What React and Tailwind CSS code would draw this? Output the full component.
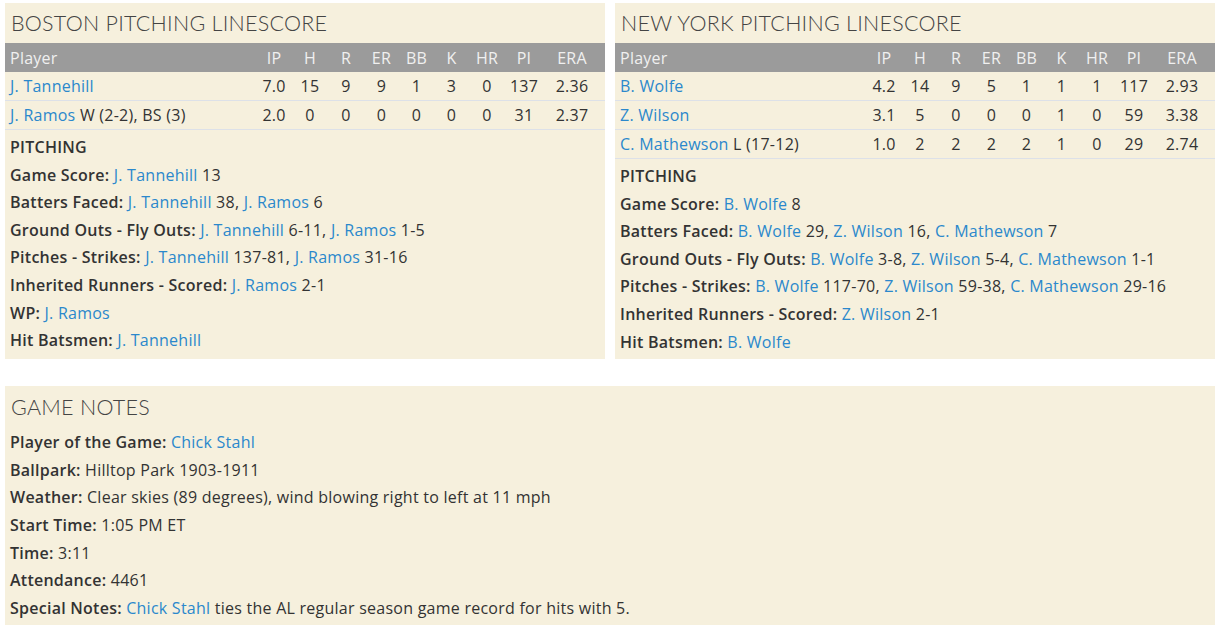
import React from "react";

const FONT = { fontFamily: "'Open Sans', Lato, sans-serif" };
const TITLE_FONT = { fontFamily: "Lato, 'Open Sans', sans-serif" };

const cols = "grid grid-cols-[1fr_36px_36px_36px_35px_35px_35px_36px_38px_62px]";
const heads = ["IP", "H", "R", "ER", "BB", "K", "HR", "PI", "ERA"];

const boston = {
  title: "BOSTON PITCHING LINESCORE",
  rows: [
    { name: "J. Tannehill", note: "", stats: ["7.0", "15", "9", "9", "1", "3", "0", "137", "2.36"] },
    { name: "J. Ramos", note: "W (2-2), BS (3)", stats: ["2.0", "0", "0", "0", "0", "0", "0", "31", "2.37"] },
  ],
  lines: [
    ["Game Score:", [["J. Tannehill", " 13"]]],
    ["Batters Faced:", [["J. Tannehill", " 38, "], ["J. Ramos", " 6"]]],
    ["Ground Outs - Fly Outs:", [["J. Tannehill", " 6-11, "], ["J. Ramos", " 1-5"]]],
    ["Pitches - Strikes:", [["J. Tannehill", " 137-81, "], ["J. Ramos", " 31-16"]]],
    ["Inherited Runners - Scored:", [["J. Ramos", " 2-1"]]],
    ["WP:", [["J. Ramos", ""]]],
    ["Hit Batsmen:", [["J. Tannehill", ""]]],
  ],
};

const newYork = {
  title: "NEW YORK PITCHING LINESCORE",
  rows: [
    { name: "B. Wolfe", note: "", stats: ["4.2", "14", "9", "5", "1", "1", "1", "117", "2.93"] },
    { name: "Z. Wilson", note: "", stats: ["3.1", "5", "0", "0", "0", "1", "0", "59", "3.38"] },
    { name: "C. Mathewson", note: "L (17-12)", stats: ["1.0", "2", "2", "2", "2", "1", "0", "29", "2.74"] },
  ],
  lines: [
    ["Game Score:", [["B. Wolfe", " 8"]]],
    ["Batters Faced:", [["B. Wolfe", " 29, "], ["Z. Wilson", " 16, "], ["C. Mathewson", " 7"]]],
    ["Ground Outs - Fly Outs:", [["B. Wolfe", " 3-8, "], ["Z. Wilson", " 5-4, "], ["C. Mathewson", " 1-1"]]],
    ["Pitches - Strikes:", [["B. Wolfe", " 117-70, "], ["Z. Wilson", " 59-38, "], ["C. Mathewson", " 29-16"]]],
    ["Inherited Runners - Scored:", [["Z. Wilson", " 2-1"]]],
    ["Hit Batsmen:", [["B. Wolfe", ""]]],
  ],
};

function Link({ children }) {
  return <a className="text-[#2b88cc] cursor-pointer">{children}</a>;
}

function Line({ label, children }) {
  return (
    <div className="leading-[27.6px] whitespace-nowrap">
      <span className="font-semibold">{label}</span> {children}
    </div>
  );
}

function Title({ children, className = "" }) {
  return (
    <h2 className={`h-[40px] text-[21.5px] font-light leading-[40px] text-[#444] ${className}`} style={TITLE_FONT}>
      {children}
    </h2>
  );
}

function Linescore({ data }) {
  return (
    <div className="w-[600px] bg-[#f6f0dd]">
      <Title className="pl-[6px]">{data.title}</Title>
      <div className={`${cols} h-[29px] items-center bg-[#9b9b9b] text-[#f0f0f0]`}>
        <div className="pl-[5px]">Player</div>
        {heads.map((h, i) => (
          <div key={h} className={`text-center ${i === 8 ? "pr-[4px]" : ""}`}>{h}</div>
        ))}
      </div>
      {data.rows.map((r) => (
        <div key={r.name} className={`${cols} h-[29px] items-center border-b border-[#dde1e8]`}>
          <div className="pl-[5px] whitespace-nowrap">
            <Link>{r.name}</Link>
            {r.note && <span> {r.note}</span>}
          </div>
          {r.stats.map((s, i) => (
            <div key={i} className={`text-center ${i === 8 ? "pr-[4px]" : ""}`}>{s}</div>
          ))}
        </div>
      ))}
      <div className="pl-[5px] pt-[4px] pb-[3px]">
        <div className="font-semibold leading-[27.6px]">PITCHING</div>
        {data.lines.map(([label, parts]) => (
          <Line key={label} label={label}>
            {parts.map(([name, rest], i) => (
              <React.Fragment key={i}>
                <Link>{name}</Link>
                {rest}
              </React.Fragment>
            ))}
          </Line>
        ))}
      </div>
    </div>
  );
}

export default function App() {
  return (
    <div
      className="bg-white w-[1216px] h-[628px] pl-[5px] pt-[3px] text-[16px] tracking-[0.25px] text-[#333]"
      style={FONT}
    >
      <div className="flex gap-[10px]">
        <Linescore data={boston} />
        <Linescore data={newYork} />
      </div>
      <div className="mt-[27px] w-[1210px] bg-[#f6f0dd] pl-[5px] pt-[1px] pb-[3px]">
        <Title className="pl-[1px] mb-[2px]">GAME NOTES</Title>
        <Line label="Player of the Game:"><Link>Chick Stahl</Link></Line>
        <Line label="Ballpark:">Hilltop Park 1903-1911</Line>
        <Line label="Weather:">Clear skies (89 degrees), wind blowing right to left at 11 mph</Line>
        <Line label="Start Time:">1:05 PM ET</Line>
        <Line label="Time:">3:11</Line>
        <Line label="Attendance:">4461</Line>
        <Line label="Special Notes:"><Link>Chick Stahl</Link> ties the AL regular season game record for hits with 5.</Line>
      </div>
    </div>
  );
}
